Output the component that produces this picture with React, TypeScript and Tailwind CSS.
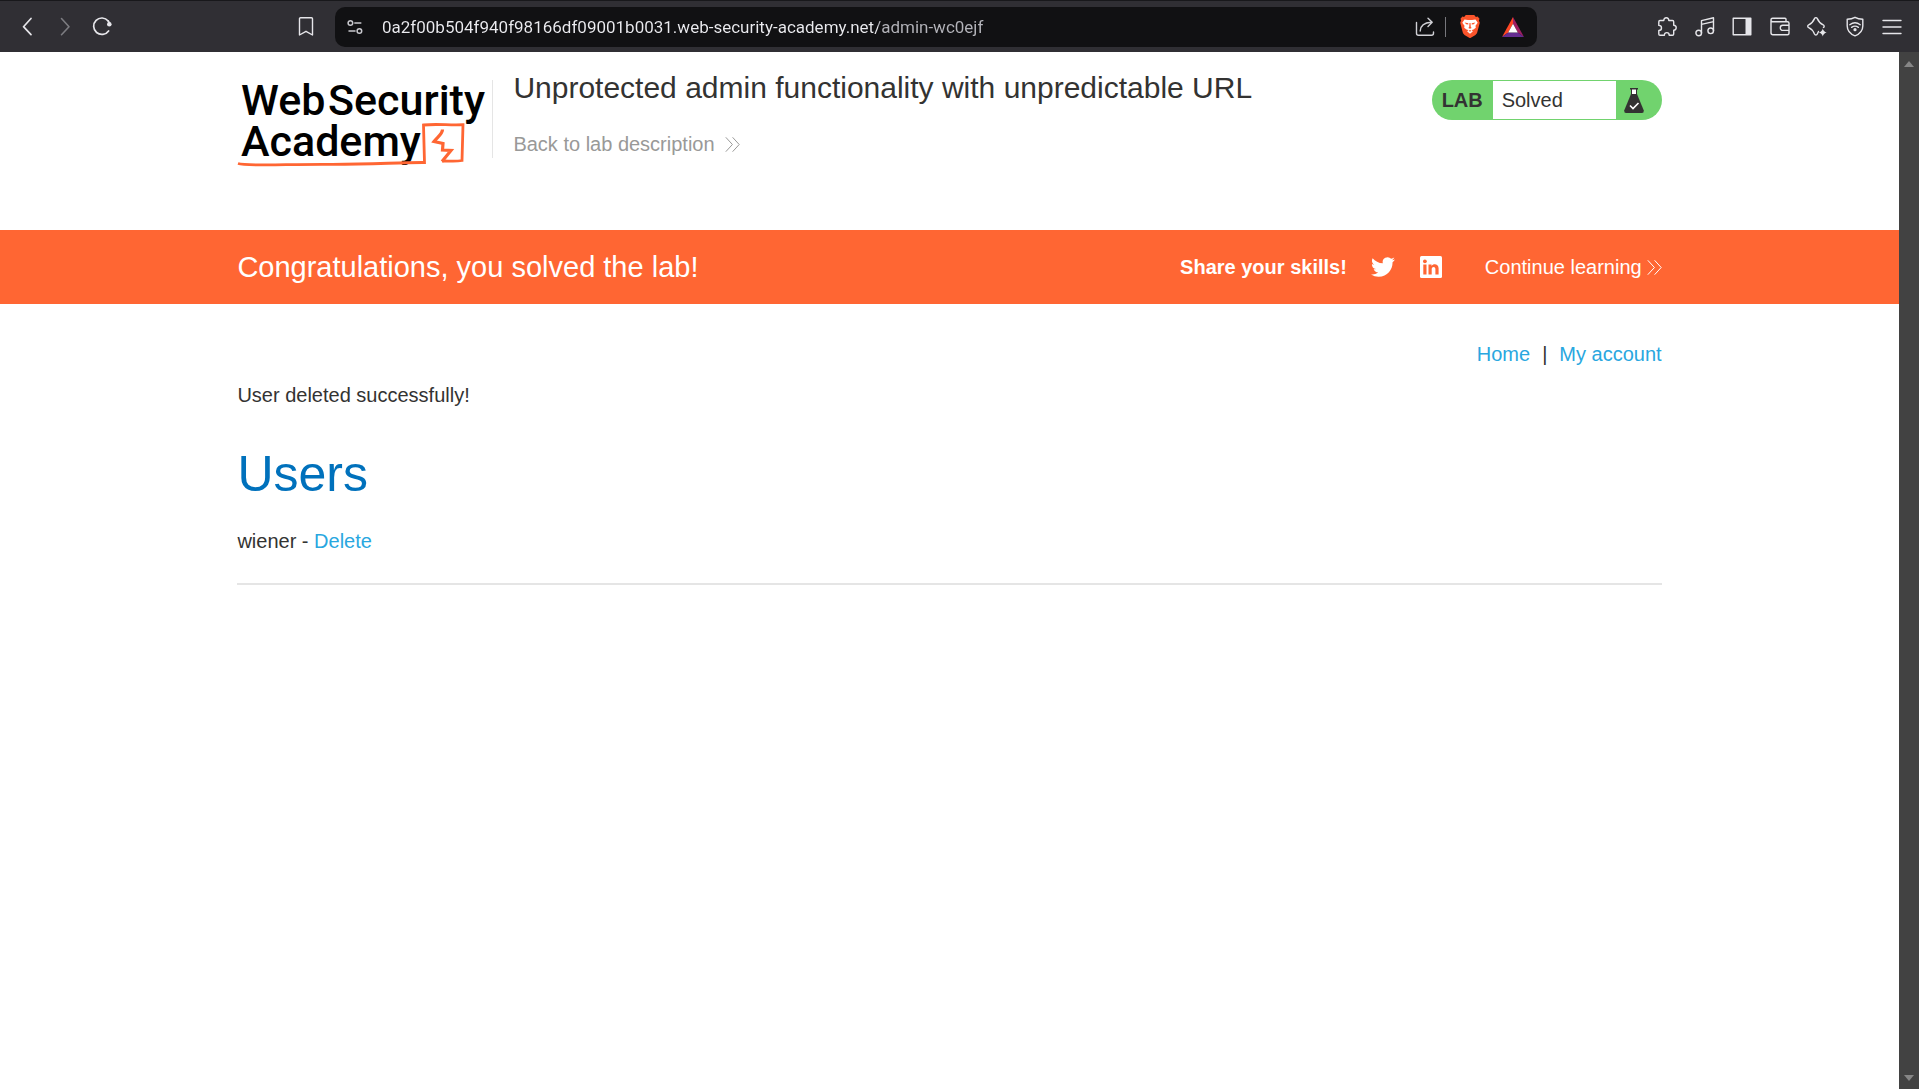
import React from "react";

const chromeButton = "flex h-8 w-6 shrink-0 items-center justify-center text-[#e6e6ea]";

function DoubleChevron({ className }: { className: string }) {
  return (
    <svg viewBox="0 0 15 15" className={className} fill="none" stroke="currentColor" strokeWidth="1" aria-hidden="true">
      <path d="M0.8 0.3 7.4 7.5 0.8 14.7M7.6 0.3 14.2 7.5 7.6 14.7" />
    </svg>
  );
}

function ToolIcon({ label, children }: { label: string; children: React.ReactNode }) {
  return (
    <button type="button" aria-label={label} className={chromeButton}>
      <svg viewBox="0 0 20 20" className="size-5 overflow-visible" fill="none" stroke="currentColor" strokeWidth="1.4" strokeLinecap="round" strokeLinejoin="round" aria-hidden="true">
        {children}
      </svg>
    </button>
  );
}

function BrowserBar() {
  return (
    <header className="flex h-[52px] items-center border-t border-[#18181b] bg-[#302f34] pl-[15px] pr-[15px]">
      <nav className="flex items-center gap-[14px]" aria-label="Browser navigation">
        <ToolIcon label="Back">
          <path d="M14 1.500 6.500 9.700l7.500 8" strokeWidth="1.700" />
        </ToolIcon>
        <button type="button" aria-label="Forward" disabled className="flex h-8 w-6 items-center justify-center text-[#7c7c81]">
          <svg viewBox="0 0 20 20" className="size-5" fill="none" stroke="currentColor" strokeWidth="1.6" strokeLinecap="round" strokeLinejoin="round" aria-hidden="true">
            <path d="m6.500 1.500 7.500 8.200-7.500 8" />
          </svg>
        </button>
        <ToolIcon label="Reload">
          <path d="M15.600 13.900A8.200 8.200 0 1 1 15.200 4" strokeWidth="1.700" />
          <circle cx="16.300" cy="7.300" r="2.300" fill="currentColor" stroke="none" />
          <path d="M15.200 4 16.800 6.500" strokeWidth="1.700" />
        </ToolIcon>
      </nav>
      <div className="ml-[179px] flex">
        <ToolIcon label="Bookmark this page">
          <path d="M4.500.7h11a1 1 0 0 1 1 1V18L10 14.300 3.500 18V1.700a1 1 0 0 1 1-1z" />
        </ToolIcon>
      </div>
      <div className="ml-[17px] mr-[118px] flex h-10 min-w-0 flex-1 items-center rounded-[10px] bg-[#111113] pl-2 pr-3">
        <button type="button" aria-label="Site information" className={chromeButton}>
          <svg viewBox="0 0 16 16" className="size-4" fill="none" stroke="#c9c9ce" strokeWidth="1.5" strokeLinecap="round" aria-hidden="true">
            <circle cx="3.4" cy="4" r="2.3" />
            <path d="M7.8 4h6" />
            <circle cx="12.4" cy="12" r="2.3" />
            <path d="M2 12h6" />
          </svg>
        </button>
        <input
          aria-label="Address"
          readOnly
          value="0a2f00b504f940f98166df09001b0031.web-security-academy.net/admin-wc0ejf"
          className="ml-[15px] min-w-0 flex-1 bg-[linear-gradient(to_right,#ececf0_496px,#b4b4ba_496px)] bg-clip-text font-[Roboto,sans-serif] text-[17px] leading-6 text-transparent outline-none"
        />
        <ToolIcon label="Share">
          <path d="M1.500 5.500v10.800a2 2 0 0 0 2 2h13a2 2 0 0 0 2-2V15M5.200 14c.3-5 3.400-8.300 11-8.700M13 1.200l4.200 4.100L13 9.400" stroke="#d0d0d5" />
        </ToolIcon>
        <span className="mx-2 h-5 w-px bg-[#77777c]" />
        <button type="button" aria-label="Brave Shields" className="ml-1 flex size-6 shrink-0 items-center justify-center">
          <svg viewBox="0 0 20 23" className="h-[23px] w-5" aria-hidden="true">
            <path d="M5.800 0h8.400l1.700 1.900 1.700-.3 1.900 2.200-.6 1.800.9 2.200-2.600 9.800c-.3 1.100-.9 1.700-1.700 2.300L10.800 22.800q-.8.4-1.600 0L4.500 19.900c-.8-.6-1.400-1.200-1.700-2.300L.2 7.800l.9-2.200L.5 3.800l1.900-2.200 1.700.3z" fill="#fb542b" />
            <path d="M4.500 4.400 8 4.900h4l3.500-.5 2.200 3.400-2.200 3 .3 2-2.300 1.700-1.700.6 1 1.500-2.800 2.200-2.800-2.200 1-1.500-1.700-.6-2.300-1.700.3-2-2.200-3z" fill="#fff" />
            <path d="m4.600 7.600 3.700.7v1.100l-2.100-.2zM15.400 7.600l-3.700.7v1.100l2.100-.2zM9.500 8h1l.3 4 .9.900-1.700.9-1.700-.9.900-.9zM8.300 16l1.700-1 1.700 1-1.700.5z" fill="#fb542b" />
          </svg>
        </button>
        <button type="button" aria-label="Brave Rewards" className="ml-[19px] flex size-6 shrink-0 items-center justify-center">
          <svg viewBox="0 0 22 20" className="h-5 w-[22px]" aria-hidden="true">
            <path d="M11 0v6.800L6.200 15.500 0 20z" fill="#ff4724" />
            <path d="M11 0v6.800l4.800 8.700L22 20z" fill="#9e1f63" />
            <path d="M0 20l6.200-4.500h9.600L22 20z" fill="#662d91" />
            <path d="m11 6.800 4.800 8.700H6.200z" fill="#fff" />
          </svg>
        </button>
      </div>
      <div className="flex w-[249px] shrink-0 items-center justify-between">
        <ToolIcon label="Extensions">
          <path d="M3 3.500h3.800C6.800 1.700 7.800.7 9.300.7s2.500 1 2.500 2.800h3.700a1.200 1.200 0 0 1 1.200 1.200v3.500c1.600.1 2.500 1 2.500 2.500s-.9 2.400-2.500 2.500V17a1.200 1.200 0 0 1-1.200 1.200h-3.300c0-1.700-.9-2.600-2.400-2.600s-2.400.9-2.400 2.600H3A1.200 1.200 0 0 1 1.800 17v-3.600c1.700 0 2.700-.9 2.700-2.500S3.500 8.400 1.800 8.400V4.700A1.200 1.200 0 0 1 3 3.500z" />
        </ToolIcon>
        <ToolIcon label="Media">
          <circle cx="3.700" cy="16" r="2.800" />
          <circle cx="15.700" cy="13.800" r="2.800" />
          <path d="M6.500 16V3.600L18.500.8v13M6.500 7.400l12-2.800" />
        </ToolIcon>
        <ToolIcon label="Side panel">
          <path d="M1.200 1.200h17.600v16.600H1.200z" />
          <path d="M13.500 1H19v17h-5.500z" fill="currentColor" stroke="none" />
        </ToolIcon>
        <ToolIcon label="Wallet">
          <path d="M1 3v12.800a2 2 0 0 0 2 2h14.500a1.500 1.500 0 0 0 1.500-1.500V6.200a1.500 1.500 0 0 0-1.500-1.500H2.700a1.700 1.700 0 0 1 0-3.500H15a1 1 0 0 1 1 1v2.500M19 8.200h-6.200a2.500 2.500 0 0 0-2.500 2.500v.2a2.500 2.500 0 0 0 2.500 2.500H19" />
        </ToolIcon>
        <ToolIcon label="Leo AI">
          <path d="M11.500 14.500 10.300 17c-.6 1.300-2.200 1.300-2.800 0C6 13.500 5.300 12.300 1.700 10.700c-1.300-.6-1.300-2.200 0-2.800C5.300 6.300 6 5.100 7.500 1.600c.6-1.300 2.200-1.300 2.800 0 1.500 3.500 2.300 4.700 5.900 6.300 1.200.6 1.300 2 .2 2.600" />
          <path d="M15.800 11.500q.6 3.200 3.900 4-3.300.8-3.900 4-.7-3.200-4-4 3.300-.8 4-4z" fill="currentColor" stroke="none" />
        </ToolIcon>
        <ToolIcon label="VPN">
          <path d="M10 .3c2.300 1.300 4.900 1.900 7.800 2V9c0 4.500-2.700 7.800-7.800 9.900C4.900 16.800 2.200 13.500 2.200 9V2.300C5.100 2.200 7.700 1.600 10 .3z" />
          <path d="M4.800 7.700q5.200-3.800 10.400 0M6.600 10.300q3.400-2.300 6.800 0" />
          <circle cx="10" cy="12.700" r="1.600" fill="currentColor" stroke="none" />
        </ToolIcon>
        <ToolIcon label="Menu">
          <path d="M1 3.500h18M1 10h18M1 16.500h18" />
        </ToolIcon>
      </div>
    </header>
  );
}

function AcademyLogo() {
  return (
    <a href="#academy" aria-label="Web Security Academy" className="block shrink-0">
      <svg viewBox="0 0 255 90" className="h-[90px] w-[255px]" aria-hidden="true">
        <g fill="#000" fontFamily="Roboto, sans-serif" fontSize="43" fontWeight="500">
          <text x="4" y="35">Web</text>
          <text x="91" y="35">Security</text>
          <text x="4" y="76">Academy</text>
        </g>
        <path d="M1 83.500c10 3 50 .500 90 .800 45 .200 70-2 96.500-1.800l-1-37.500c14-1.500 26 .5 39.500-.3L225 80.500c-7 1.500-14 .3-20 .5" fill="none" stroke="#ff6633" strokeWidth="2.800" />
        <path d="M205.500 49.500c0 4.500-5 7.500-8.500 12l9 2-.5 6.500 8.500.5-9 11" fill="none" stroke="#ff6633" strokeWidth="3.200" />
      </svg>
    </a>
  );
}

function LabStatus() {
  return (
    <div className="flex h-10 w-[230px] shrink-0 items-center rounded-full bg-[#71d36e] text-xl leading-6 text-[#333332]">
      <strong className="w-[61px] pl-[10px]">LAB</strong>
      <span className="flex h-[38px] w-[123px] items-center bg-white pl-[9px]">Solved</span>
      <svg viewBox="0 0 20 25" className="ml-2 h-[25px] w-5" aria-hidden="true">
        <path d="M6 0h8v1.500h-1V7h-6V1.500H6z" fill="#333332" />
        <path d="M8 1.500h4V6H8z" fill="#fff" />
        <path d="M7 6h6l6.800 16.500Q20 25 18 25H2Q0 25 .2 22.500z" fill="#333332" />
        <path d="m6 17.500 3 3 5.500-5.500" fill="none" stroke="#fff" strokeWidth="1.600" />
      </svg>
    </div>
  );
}

function Banner() {
  return (
    <section className="bg-[#ff6633] text-white">
      <div className="mx-auto flex h-[74px] w-3/4 items-center">
        <h2 className="text-[29px] leading-9">Congratulations, you solved the lab!</h2>
        <div className="ml-auto flex items-center text-xl leading-6">
          <strong>Share your skills!</strong>
          <a href="#twitter" aria-label="Share on Twitter" className="ml-6">
            <svg viewBox="0 0 24 24" className="size-6" fill="currentColor" aria-hidden="true">
              <path d="M23.950 4.570a10 10 0 0 1-2.820.770 4.960 4.960 0 0 0 2.160-2.720 9.990 9.990 0 0 1-3.120 1.190 4.920 4.920 0 0 0-8.380 4.480C7.690 8.090 4.070 6.130 1.640 3.160a4.820 4.820 0 0 0-.670 2.480c0 1.710.870 3.210 2.190 4.100a4.900 4.900 0 0 1-2.230-.620v.060a4.920 4.920 0 0 0 3.950 4.830 5 5 0 0 1-2.210.080 4.940 4.940 0 0 0 4.600 3.420A9.870 9.870 0 0 1 0 19.540a14 14 0 0 0 7.550 2.210c9.050 0 14-7.500 14-13.980 0-.210 0-.420-.020-.630a9.940 9.940 0 0 0 2.460-2.550z" />
            </svg>
          </a>
          <a href="#linkedin" aria-label="Share on LinkedIn" className="ml-6">
            <svg viewBox="0 0 24 24" className="size-6" aria-hidden="true">
              <rect x="1" y="1" width="22" height="22" rx="1.500" fill="#fff" />
              <path d="M4.300 9.500h3.200v10H4.300zM9.500 9.500h3v1.400c1.500-2.500 7.100-2.500 7.100 2.400v6.200h-3.200V14c0-2.900-3.700-2.700-3.700 0v5.500H9.500z" fill="#ff6633" />
              <circle cx="5.900" cy="6.300" r="1.900" fill="#ff6633" />
            </svg>
          </a>
          <a href="#continue" className="ml-[42px] flex items-center gap-[5px]">
            Continue learning
            <DoubleChevron className="size-[15px]" />
          </a>
        </div>
      </div>
    </section>
  );
}

export default function App() {
  return (
    <div className="flex h-screen flex-col bg-white font-['Liberation_Sans',Arial,sans-serif] text-[#333332]">
      <BrowserBar />
      <div className="flex min-h-0 flex-1">
        <div className="min-w-0 flex-1">
          <header className="mx-auto flex h-[178px] w-3/4 items-start pt-7">
            <AcademyLogo />
            <div className="h-[78px] border-l border-[#e5e5e5] pl-5">
              <h1 className="-mt-2.5 text-[30px] leading-9">Unprotected admin functionality with unpredictable URL</h1>
              <a href="#lab" className="mt-[26px] flex items-center gap-[10px] text-xl leading-6 text-[#999998]">
                Back to lab description
                <DoubleChevron className="size-[15px]" />
              </a>
            </div>
            <div className="ml-auto">
              <LabStatus />
            </div>
          </header>
          <Banner />
          <main className="mx-auto w-3/4 border-b-2 border-[#e5e5e5] pb-[30px] pt-[38px] text-xl leading-6">
            <nav className="flex justify-end gap-3" aria-label="Account">
              <a href="#home" className="text-[#29a7df]">Home</a>
              <span>|</span>
              <a href="#account" className="text-[#29a7df]">My account</a>
            </nav>
            <p className="mt-[17px]">User deleted successfully!</p>
            <h1 className="mt-[37px] text-[50px] leading-[60px] text-[#0071bc]">Users</h1>
            <p className="mt-[25px]">
              wiener - <a href="#delete" className="text-[#29a7df]">Delete</a>
            </p>
          </main>
        </div>
        <div className="flex w-5 shrink-0 flex-col items-center justify-between bg-[#424242] pb-2 pt-[9px]" aria-hidden="true">
          <svg viewBox="0 0 10 6" className="h-[6px] w-[10px]" fill="#868686">
            <path d="m5 0 5 6H0z" />
          </svg>
          <svg viewBox="0 0 10 6" className="h-[6px] w-[10px]" fill="#868686">
            <path d="M0 0h10L5 6z" />
          </svg>
        </div>
      </div>
    </div>
  );
}
